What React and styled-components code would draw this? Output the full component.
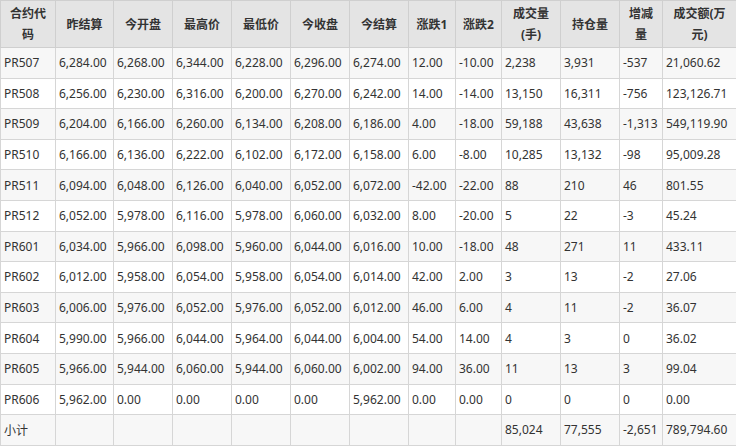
import React from 'react';
import styled, { createGlobalStyle } from 'styled-components';

const Global = createGlobalStyle`
  body { margin: 0; background: #fff; }
`;

const cols = [55, 58, 59, 59, 59, 59, 59, 47, 46, 59, 59, 43, 74];
const heads = ['合约代码', '昨结算', '今开盘', '最高价', '最低价', '今收盘', '今结算', '涨跌1', '涨跌2', '成交量(手)', '持仓量', '增减量', '成交额(万元)'];

const rows = [
  ['PR507', '6,284.00', '6,268.00', '6,344.00', '6,228.00', '6,296.00', '6,274.00', '12.00', '-10.00', '2,238', '3,931', '-537', '21,060.62'],
  ['PR508', '6,256.00', '6,230.00', '6,316.00', '6,200.00', '6,270.00', '6,242.00', '14.00', '-14.00', '13,150', '16,311', '-756', '123,126.71'],
  ['PR509', '6,204.00', '6,166.00', '6,260.00', '6,134.00', '6,208.00', '6,186.00', '4.00', '-18.00', '59,188', '43,638', '-1,313', '549,119.90'],
  ['PR510', '6,166.00', '6,136.00', '6,222.00', '6,102.00', '6,172.00', '6,158.00', '6.00', '-8.00', '10,285', '13,132', '-98', '95,009.28'],
  ['PR511', '6,094.00', '6,048.00', '6,126.00', '6,040.00', '6,052.00', '6,072.00', '-42.00', '-22.00', '88', '210', '46', '801.55'],
  ['PR512', '6,052.00', '5,978.00', '6,116.00', '5,978.00', '6,060.00', '6,032.00', '8.00', '-20.00', '5', '22', '-3', '45.24'],
  ['PR601', '6,034.00', '5,966.00', '6,098.00', '5,960.00', '6,044.00', '6,016.00', '10.00', '-18.00', '48', '271', '11', '433.11'],
  ['PR602', '6,012.00', '5,958.00', '6,054.00', '5,958.00', '6,054.00', '6,014.00', '42.00', '2.00', '3', '13', '-2', '27.06'],
  ['PR603', '6,006.00', '5,976.00', '6,052.00', '5,976.00', '6,052.00', '6,012.00', '46.00', '6.00', '4', '11', '-2', '36.07'],
  ['PR604', '5,990.00', '5,966.00', '6,044.00', '5,964.00', '6,044.00', '6,004.00', '54.00', '14.00', '4', '3', '0', '36.02'],
  ['PR605', '5,966.00', '5,944.00', '6,060.00', '5,944.00', '6,060.00', '6,002.00', '94.00', '36.00', '11', '13', '3', '99.04'],
  ['PR606', '5,962.00', '0.00', '0.00', '0.00', '0.00', '5,962.00', '0.00', '0.00', '0', '0', '0', '0.00'],
  ['小计', '', '', '', '', '', '', '', '', '85,024', '77,555', '-2,651', '789,794.60'],
];

const Table = styled.table`
  width: 736px;
  table-layout: fixed;
  border-collapse: collapse;
  font-family: "Noto Sans", "Noto Sans CJK SC", sans-serif;
  font-size: 12px;
  color: #333;
`;

const Th = styled.th`
  background: #e4e4e4;
  border: 1px solid #cfcfcf;
  height: 46px;
  padding: 0 6px;
  font-weight: bold;
  line-height: 21px;
  text-align: center;
`;

const Tr = styled.tr`
  background: ${p => (p.$odd ? '#f7f7f7' : '#fff')};
`;

const Td = styled.td`
  border: 1px solid #d6d6d6;
  height: 29.6px;
  padding: 0 3px;
  white-space: nowrap;
  overflow: hidden;
`;

export default function App() {
  return (
    <>
      <Global />
      <Table>
        <colgroup>
          {cols.map((w, i) => <col key={i} style={{ width: w }} />)}
        </colgroup>
        <thead>
          <tr>{heads.map(h => <Th key={h}>{h}</Th>)}</tr>
        </thead>
        <tbody>
          {rows.map((r, i) => (
            <Tr key={i} $odd={i % 2 === 0}>
              {r.map((c, j) => <Td key={j}>{c}</Td>)}
            </Tr>
          ))}
        </tbody>
      </Table>
    </>
  );
}
